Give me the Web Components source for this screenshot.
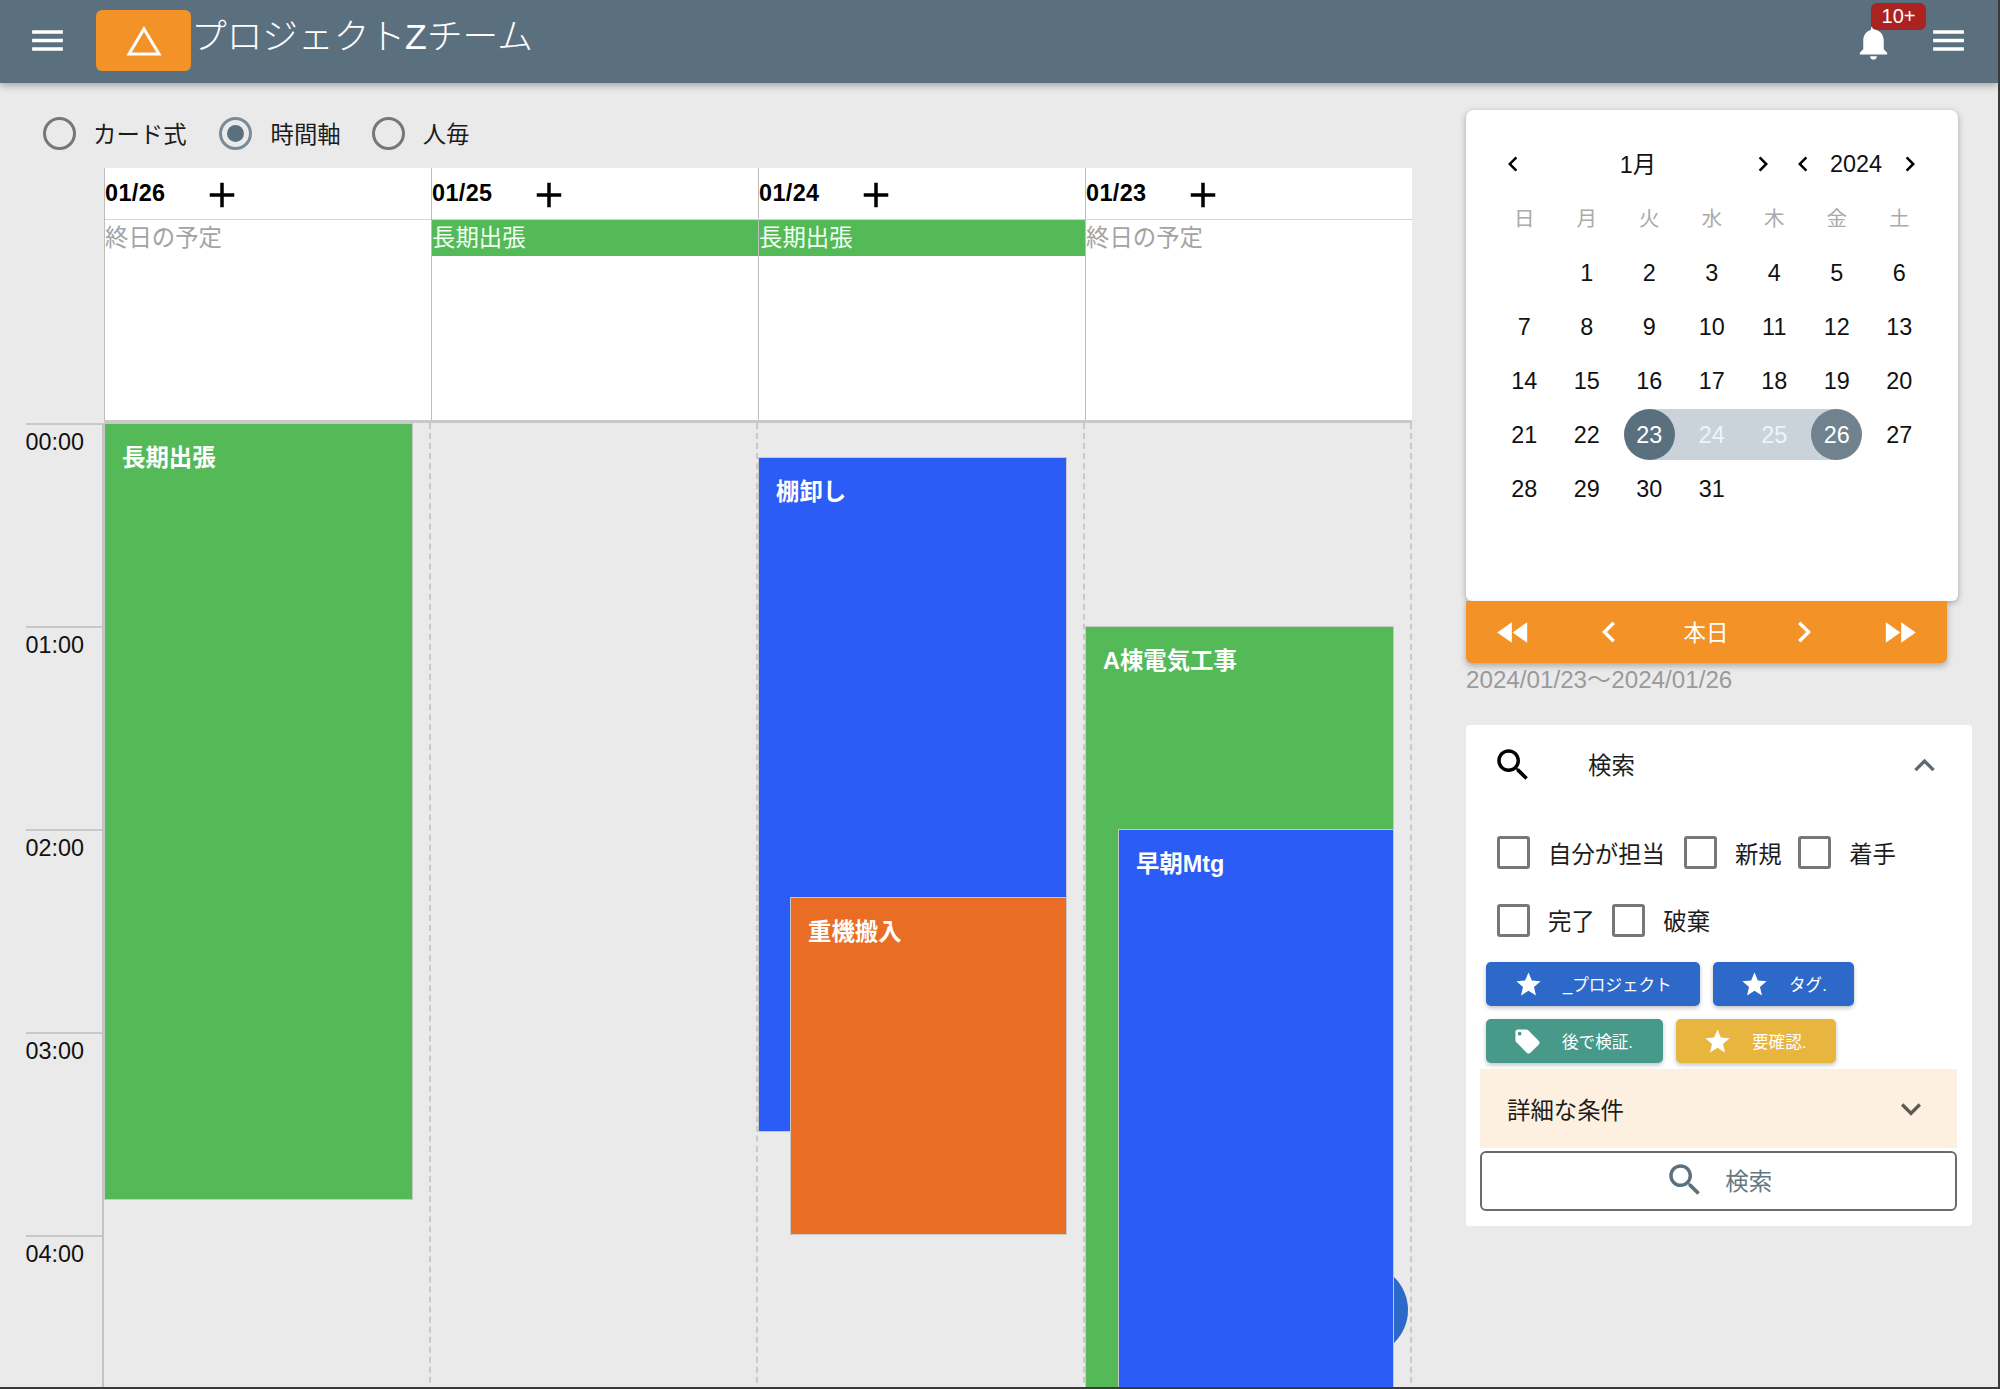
<!DOCTYPE html>
<html lang="ja">
<head>
<meta charset="utf-8">
<title>プロジェクトZチーム</title>
<style>
html,body{margin:0;padding:0;background:#eaeaea}
body{font-family:"Liberation Sans","Noto Sans CJK JP",sans-serif;font-size:23.4px;color:#1c1c1c}
page-shell{display:block}
</style>
</head>
<body>
<page-shell>
  <app-header slot="top">プロジェクトZチーム</app-header>
  <div slot="left">
    <view-switch></view-switch>
    <day-board>
      <day-head slot="head" date="01/26"></day-head>
      <day-head slot="head" date="01/25" banner="長期出張"></day-head>
      <day-head slot="head" date="01/24" banner="長期出張"></day-head>
      <day-head slot="head" date="01/23"></day-head>
      <time-gutter slot="gutter"></time-gutter>
      <day-track slot="track"><cal-event top="0" left="0" w="308.5" h="777" color="#53ba57">長期出張</cal-event></day-track>
      <day-track slot="track"></day-track>
      <day-track slot="track">
        <cal-event top="34" left="0" w="309" h="675" color="#2b5cf6">棚卸し</cal-event>
        <cal-event top="474" left="32" w="277" h="338" color="#ea6d25">重機搬入</cal-event>
      </day-track>
      <day-track slot="track">
        <fab-dot></fab-dot>
        <cal-event top="203" left="0" w="309" h="800" color="#53ba57">A棟電気工事</cal-event>
        <cal-event top="406" left="33" w="276" h="600" color="#2b5cf6">早朝Mtg</cal-event>
      </day-track>
    </day-board>
  </div>
  <div slot="right">
    <mini-calendar></mini-calendar>
    <date-nav></date-nav>
    <search-panel>
      <filter-check gap="19">自分が担当</filter-check>
      <filter-check gap="16.5">新規</filter-check>
      <filter-check gap="16.5">着手</filter-check>
      <filter-check gap="17.5">完了</filter-check>
      <filter-check gap="16.5">破棄</filter-check>
      <filter-tag slot="tags" icon="star" color="#2d69c8" w="214" pad="28">_プロジェクト</filter-tag>
      <filter-tag slot="tags" icon="star" color="#2d69c8" w="141" pad="27">タグ.</filter-tag>
      <filter-tag slot="tags" icon="label" color="#479a8a" w="177" pad="27">後で検証.</filter-tag>
      <filter-tag slot="tags" icon="star" color="#e8b53f" w="160" pad="27">要確認.</filter-tag>
    </search-panel>
  </div>
</page-shell>
<script>
const ICONS={
menu:"M3 18h18v-2H3v2zm0-5h18v-2H3v2zm0-7v2h18V6H3z",
bell:"M12 22c1.1 0 2-.9 2-2h-4c0 1.1.89 2 2 2zm6-6v-5c0-3.07-1.64-5.64-4.5-6.32V4c0-.83-.67-1.5-1.5-1.5s-1.5.67-1.5 1.5v.68C7.63 5.36 6 7.92 6 11v5l-2 2v1h16v-1l-2-2z",
plus:"M19 13h-6v6h-2v-6H5v-2h6V5h2v6h6v2z",
search:"M15.5 14h-.79l-.28-.27C15.41 12.59 16 11.11 16 9.5 16 5.91 13.09 3 9.5 3S3 5.91 3 9.5 5.91 16 9.5 16c1.61 0 3.09-.59 4.23-1.57l.27.28v.79l5 4.99L20.49 19l-4.99-5zm-6 0C7.01 14 5 11.99 5 9.5S7.01 5 9.5 5 14 7.01 14 9.5 11.99 14 9.5 14z",
star:"M12 17.27L18.18 21l-1.64-7.03L22 9.24l-7.19-.61L12 2 9.19 8.63 2 9.24l5.46 4.73L5.82 21z",
label:"M21.41 11.58l-9-9C12.05 2.22 11.55 2 11 2H4c-1.1 0-2 .9-2 2v7c0 .55.22 1.05.59 1.42l9 9c.36.36.86.58 1.41.58.55 0 1.05-.22 1.41-.59l7-7c.37-.36.59-.86.59-1.41 0-.55-.23-1.06-.59-1.42zM5.5 7C4.67 7 4 6.33 4 5.5S4.67 4 5.5 4 7 4.67 7 5.5 6.33 7 5.5 7z",
left:"M15.41 7.41L14 6l-6 6 6 6 1.41-1.41L10.83 12z",
right:"M10 6L8.59 7.41 13.17 12l-4.58 4.59L10 18l6-6z",
more:"M16.59 8.59L12 13.17 7.41 8.59 6 10l6 6 6-6z",
less:"M12 8l-6 6 1.41 1.41L12 10.83l4.59 4.58L18 14z",
rew:"M11 18V6l-8.5 6 8.5 6zm.5-6l8.5 6V6l-8.5 6z",
ffw:"M4 18l8.5-6L4 6v12zm9-12v12l8.5-6L13 6z"};
function def(name,html,init){
  customElements.define(name,class extends HTMLElement{
    constructor(){super();this.attachShadow({mode:"open"});}
    connectedCallback(){
      this.shadowRoot.innerHTML=typeof html==="function"?html(this):html;
      if(init)init(this);
    }
  });
}
def("ui-icon",h=>{
  const s=h.getAttribute("size")||"24";
  return `<style>:host{display:inline-flex;flex:none;width:${s}px;height:${s}px}svg{display:block;width:100%;height:100%;fill:currentColor}</style>
  <svg viewBox="0 0 24 24" aria-hidden="true"><path d="${ICONS[h.getAttribute("name")]}"/></svg>`;
});
def("page-shell",`<style>
:host{display:block;position:relative;box-sizing:border-box;width:2000px;height:1389px;overflow:hidden;background:#eaeaea;border-right:2px solid #3a3a3a;border-bottom:2px solid #3a3a3a}
.main{display:flex;align-items:flex-start;height:1304px;overflow:hidden}
.l{flex:none;width:1466px;height:100%;overflow:hidden}
.r{flex:none;width:506px;padding-top:27px}
</style>
<slot name="top"></slot>
<div class="main"><div class="l"><slot name="left"></slot></div><div class="r"><slot name="right"></slot></div></div>`);
def("app-header",`<style>
:host{display:flex;align-items:flex-start;position:relative;z-index:3;box-sizing:border-box;height:83px;padding-left:27px;background:#5b707f;color:#fff;box-shadow:0 3px 7px rgba(0,0,0,.28)}
.m{margin-top:20px}
.logo{display:flex;align-items:center;justify-content:center;width:95px;height:61px;margin:10px 0 0 28px;background:#f29227;border-radius:6px}
.logo svg{display:block;width:36px;height:30px;margin:0 0 0 1px}
.t{margin:13px 0 0 0;font-size:35.7px;line-height:48px;font-weight:300;white-space:nowrap}
.sp{flex:1}
.bell{position:relative;margin:22px 34px 0 0;width:41px;height:41px}
.badge{position:absolute;left:18px;top:-19px;box-sizing:border-box;width:55px;height:27px;background:#aa2320;border-radius:6px;font-size:20px;line-height:27px;text-align:center}
.m2{margin:20px 29px 0 0}
</style>
<ui-icon class="m" name="menu" size="41"></ui-icon>
<div class="logo"><svg viewBox="0 0 36 30"><polygon points="18,3 33,28 3,28" fill="none" stroke="#fff" stroke-width="3"/></svg></div>
<div class="t"><slot></slot></div>
<div class="sp"></div>
<div class="bell"><ui-icon name="bell" size="41"></ui-icon><div class="badge">10+</div></div>
<ui-icon class="m2" name="menu" size="41"></ui-icon>`);
def("view-switch",`<style>
:host{display:flex;align-items:center;box-sizing:border-box;height:85px;padding:16px 0 0 43px}
span{margin-top:-2px}
.r{flex:none;box-sizing:border-box;width:33px;height:33px;margin-top:0;border-radius:50%;border:3px solid #777;display:flex;align-items:center;justify-content:center}
.r.on{border-color:#7a8b97}
.r.on i{display:block;width:17px;height:17px;border-radius:50%;background:#5b707f}
.a{margin-left:17px;margin-right:32px}.b{margin-left:19px;margin-right:31px}
</style>
<span class="r"></span><span class="a">カード式</span>
<span class="r on"><i></i></span><span class="b">時間軸</span>
<span class="r"></span><span style="margin-left:18px">人毎</span>`);
def("day-board",`<style>
:host{display:block;width:1412px}
.h{display:flex;margin-left:104px;height:255px;box-sizing:border-box;border-bottom:3px solid #c9c9c9}
.b{display:flex;height:1000px}
</style>
<div class="h"><slot name="head"></slot></div>
<div class="b"><slot name="gutter"></slot><slot name="track"></slot></div>`);
def("day-head",h=>`<style>
:host{display:block;box-sizing:border-box;flex:none;width:327px;background:#fff;border-left:1px solid #bdbdbd}
.top{display:flex;align-items:center;height:51px;border-bottom:1px solid #d4d4d4;color:#000}
.d{width:96px;font-weight:700;font-size:23.4px;letter-spacing:.4px;margin-top:0}
.top ui-icon{margin-top:3px}
.all{height:36px;line-height:36px;white-space:nowrap}
.g{color:#a3a3a3}
.b{background:#53ba57;color:#f2fff2}
</style>
<div class="top"><span class="d">${h.getAttribute("date")}</span><ui-icon name="plus" size="42"></ui-icon></div>
${h.getAttribute("banner")?`<div class="all b">${h.getAttribute("banner")}</div>`:`<div class="all g">終日の予定</div>`}`);
def("time-gutter",()=>`<style>
:host{display:block;flex:none;box-sizing:border-box;width:104px;border-right:2px solid #c4c4c4;padding-left:25.5px}
div{box-sizing:border-box;height:203px;border-top:2px solid #c9c9c9;padding-top:1px;font-size:23.4px;line-height:32px;color:#111}
</style>${["00:00","01:00","02:00","03:00","04:00"].map(t=>`<div>${t}</div>`).join("")}`);
def("day-track",`<style>
:host{display:block;flex:none;position:relative;box-sizing:border-box;width:327px;height:1000px;border-right:2px dashed #c9c9c9}
</style><slot></slot>`);
def("cal-event",h=>`<style>
:host{display:block;position:absolute;box-sizing:border-box;top:${h.getAttribute("top")}px;left:${h.getAttribute("left")}px;width:${h.getAttribute("w")}px;height:${h.getAttribute("h")}px;background:${h.getAttribute("color")};border:1.5px solid #c8c8c8;padding:18px 0 0 17px;color:#fff;font-weight:700;line-height:32px}
</style><slot></slot>`);
def("fab-dot",`<style>:host{display:block;position:absolute;left:231px;top:841px;width:92px;height:92px;border-radius:50%;background:#2d69c8}</style>`);
def("mini-calendar",()=>{
  const wd=["日","月","火","水","木","金","土"].map(d=>`<div class="w">${d}</div>`).join("");
  let cells='<div class="c"></div>';
  for(let i=1;i<=31;i++){
    let cl="c";
    if(i===23)cl+=" s";else if(i===26)cl+=" e";else if(i===24||i===25)cl+=" m";
    cells+=`<div class="${cl}"><span>${i}</span></div>`;
  }
  return `<style>
:host{display:block;position:relative;z-index:1;box-sizing:border-box;width:492px;height:491px;padding:27px 0 0 27px;background:#fff;border-radius:8px 8px 6px 6px;box-shadow:0 2px 6px rgba(0,0,0,.3);color:#111}
.top{position:relative;height:54px;width:438px}
.top>*{position:absolute;top:50%;transform:translate(-50%,-50%)}
.top ui-icon{color:#000}
.g{display:grid;grid-template-columns:repeat(7,62.5px);grid-auto-rows:54px}
.w{display:flex;align-items:center;justify-content:center;color:#aaa;font-size:20.5px;padding-bottom:2px}
.c{position:relative;display:flex;align-items:center;justify-content:center;font-size:23.4px}
.c span{position:relative;box-sizing:border-box;display:flex;align-items:center;justify-content:center;width:51px;height:51px;padding-top:2px;border-radius:50%}
.s,.e,.m{color:#fff}
.m{color:#f1f4f6}
.s::before,.e::before,.m::before{content:"";position:absolute;top:1.5px;height:51px;background:#cbd3da}
.m::before{left:-1px;right:-1px}
.s::before{left:50%;right:0}
.e::before{left:0;right:50%}
.s span{background:#5b707f}.e span{background:#6f828e}
</style>
<div class="top">
<ui-icon name="left" size="30" style="left:20px"></ui-icon><span style="left:145px;top:calc(50% - 1px)">1月</span><ui-icon name="right" size="30" style="left:269.5px"></ui-icon>
<ui-icon name="left" size="30" style="left:310px"></ui-icon><span style="left:363px">2024</span><ui-icon name="right" size="30" style="left:417px"></ui-icon>
</div>
<div class="g">${wd}${cells}</div>`;
});
def("date-nav",`<style>
:host{display:block}
.b{display:grid;grid-template-columns:repeat(5,1fr);align-items:center;justify-items:center;width:481px;height:62px;background:#f29227;border-radius:0 0 6px 6px;box-shadow:0 3px 6px rgba(0,0,0,.28);color:#fff;position:relative;z-index:2;font-size:22.5px}
.b span{margin:-3px 1px 0 0}
.t{display:block;margin-top:0;height:62px;line-height:34px;font-size:24.2px;color:#9a9a9a;white-space:nowrap}
</style>
<div class="b"><ui-icon name="rew" size="41" style="margin-right:1px"></ui-icon><ui-icon name="left" size="42" style="margin-right:2px"></ui-icon><span>本日</span><ui-icon name="right" size="42" style="margin-left:3px"></ui-icon><ui-icon name="ffw" size="41" style="margin-left:2px"></ui-icon></div>
<span class="t">2024/01/23〜2024/01/26</span>`);
def("search-panel",`<style>
:host{display:block;box-sizing:border-box;width:506px;height:501px;background:#fff;padding:0 15px 0 14px;border-radius:3px}
.hd{display:flex;align-items:center;height:80px;padding-left:12px}
.hd span{margin:-2px 0 0 54px;flex:1}
.hd .c{color:#5b6a72;margin-right:12px}
.chk{display:flex;flex-wrap:wrap;padding:14px 0 0 17px;height:136px;align-content:flex-start}
.tags{display:flex;flex-wrap:wrap;gap:13px;margin:7px 0 0 6px;height:101px;align-content:flex-start}
.acc{display:flex;align-items:center;justify-content:space-between;height:79px;margin-top:6px;background:#fdf0e0;padding:0 26px 0 27px}
.acc ui-icon{color:#5b5b50}
.btn{display:flex;align-items:center;justify-content:center;box-sizing:border-box;height:60px;margin-top:3px;border:2px solid #6b6b6b;border-radius:6px;color:#66787f;gap:19.5px;padding:0 1px 2px 0}
.btn ui-icon{color:#5b707f}
</style>
<div class="hd"><ui-icon name="search" size="42" style="color:#000"></ui-icon><span>検索</span><ui-icon class="c" name="less" size="41"></ui-icon></div>
<div class="chk"><slot></slot></div>
<div class="tags"><slot name="tags"></slot></div>
<div class="acc"><span>詳細な条件</span><ui-icon name="more" size="40"></ui-icon></div>
<div class="btn"><ui-icon name="search" size="42"></ui-icon><span>検索</span></div>`);
def("filter-check",h=>`<style>
:host{display:flex;align-items:center;height:67.5px;margin-right:${h.getAttribute("gap")}px}
i{display:block;box-sizing:border-box;width:33px;height:33px;border:3.5px solid #777;border-radius:3px;margin-right:18px}
</style><i></i><slot></slot>`);
def("filter-tag",h=>`<style>
:host{display:flex;align-items:center;box-sizing:border-box;width:${h.getAttribute("w")}px;height:44px;padding-left:${h.getAttribute("pad")}px;background:${h.getAttribute("color")};color:#fff;border-radius:5px;box-shadow:0 2px 4px rgba(0,0,0,.25);font-size:16.6px;white-space:nowrap}
ui-icon{margin-right:20px}
</style><ui-icon name="${h.getAttribute("icon")}" size="29"></ui-icon><slot></slot>`);
</script>
</body>
</html>
